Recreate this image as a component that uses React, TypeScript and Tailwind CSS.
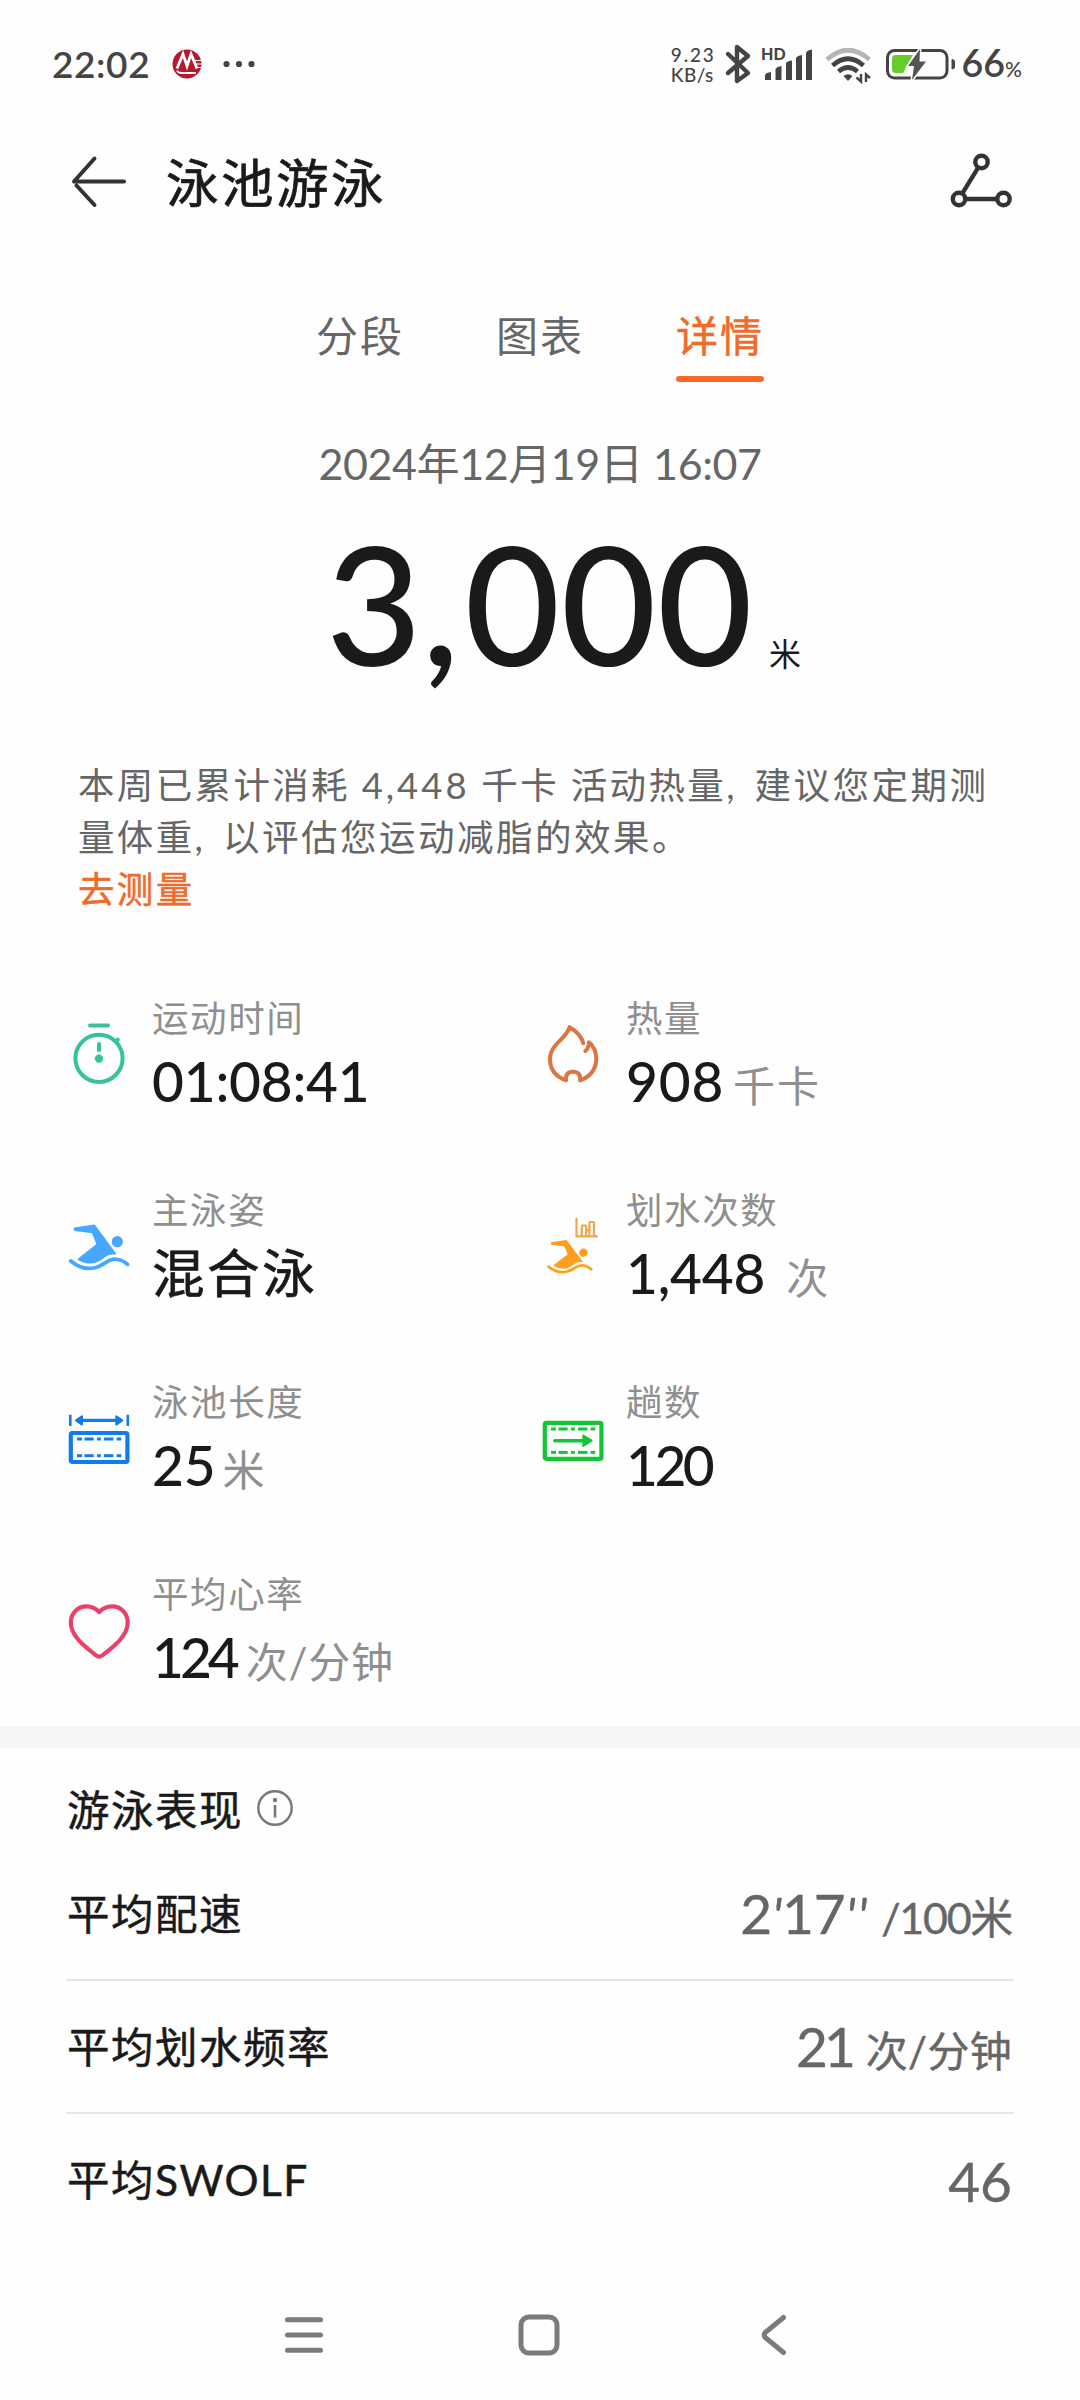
import * as React from "react";

type Stat = {
	label: string;
	value: string;
	unit?: string;
	unitClass?: string;
	valueClass?: string;
	icon: React.ReactNode;
};

const POOL_DASHES = [
	[11, 16],
	[18.5, 27.7],
	[31, 34.8],
	[38, 47.4],
	[50.6, 55.3],
];

function Dashes({ y }: { y: number }) {
	return (
		<>
			{POOL_DASHES.map(([from, to]) => (
				<path key={from} d={`M${from} ${y}H${to}`} strokeWidth="3" />
			))}
		</>
	);
}

function IconBox({ children }: { children: React.ReactNode }) {
	return (
		<svg
			viewBox="0 0 66 66"
			fill="none"
			className="w-[66px] h-[66px] shrink-0"
			aria-hidden="true"
		>
			{children}
		</svg>
	);
}

function StopwatchIcon() {
	return (
		<IconBox>
			<g stroke="#36c29a" strokeWidth="4">
				<path d="M24 4.5H42" strokeLinecap="round" />
				<circle cx="33" cy="37.3" r="23.6" />
				<path d="M50 20.5L51.8 18.6" strokeLinecap="round" />
				<path d="M33 30.7V23" />
			</g>
			<circle cx="33" cy="23" r="2" fill="#36c29a" />
			<circle cx="33" cy="37.6" r="4.2" fill="#36c29a" />
		</IconBox>
	);
}

function FlameIcon() {
	return (
		<IconBox>
			<path
				d="M43.3 22.3C41.5 15.5 35.5 9.5 29.5 6.2C26.5 18 10 23 10 38C10 49 16.5 56 26 59.3C25.5 53.5 28 50.8 33 50.8C38 50.8 40.8 53.5 40 59.3C50 56 56.3 48 56.3 38C56.3 31 53.5 25 49 21.3C48.8 25.5 47.8 28 45.3 30"
				stroke="#dd7443"
				strokeWidth="4"
				strokeLinecap="round"
				strokeLinejoin="round"
			/>
		</IconBox>
	);
}

function Swimmer({ color }: { color: string }) {
	return (
		<>
			<path
				d="M8.5 15.2L28.3 12.3L49.3 40.8C42 39.8 38.5 43.5 34.5 46.5C27.5 51 19.5 50.5 12.3 46.3L31.3 31.3L26.5 19.5L8.8 17.2Z"
				fill={color}
				stroke={color}
				strokeWidth="1.6"
				strokeLinejoin="round"
			/>
			<circle cx="51.3" cy="28.7" r="5.6" fill={color} />
			<path
				d="M4.8 48C12 54 21 57 30 54.5C40 51.5 42.5 44.5 52 46.5C56.5 47.3 59 48.8 61.5 51.3"
				stroke={color}
				strokeWidth="3.8"
				strokeLinecap="round"
			/>
		</>
	);
}

function StrokeCountIcon() {
	return (
		<IconBox>
			<g transform="translate(5 18.7) scale(.75 .73)">
				<Swimmer color="#ff9d1c" />
			</g>
			<path
				d="M36.5 5V23.3H57.8M41.8 22.5V13.5Q41.8 12.7 42.6 12.7H45.4Q46.2 12.7 46.2 13.5V22.5M46.2 17.3H49.4M49.4 22.5V10Q49.4 9 50.4 9H53Q54 9 54 10V22.5"
				stroke="#eda84d"
				strokeWidth="2.2"
			/>
		</IconBox>
	);
}

function PoolIcon() {
	return (
		<IconBox>
			<g stroke="#107dee">
				<rect x="4.8" y="28" width="56.6" height="29" rx="1.5" strokeWidth="4.2" />
				<Dashes y={34} />
				<Dashes y={50.7} />
				<path d="M4.3 9.8V21M61.8 9.8V21" strokeWidth="2.6" />
				<path d="M14 15.4H52" strokeWidth="3.4" />
				<path
					d="M10 15.4L16 11.2V19.6ZM56.3 15.4L50.3 11.2V19.6Z"
					fill="#107dee"
					strokeWidth="2"
					strokeLinejoin="round"
				/>
			</g>
		</IconBox>
	);
}

function LapsIcon() {
	return (
		<IconBox>
			<g stroke="#12c736">
				<rect x="4.8" y="17.8" width="56.6" height="36" rx="1.5" strokeWidth="4.2" />
				<Dashes y={24} />
				<Dashes y={47.4} />
				<path d="M14.8 35.7H44" strokeWidth="3.6" strokeLinecap="round" />
				<path
					d="M43.3 30.5L51.6 35.7L43.3 41Z"
					fill="#12c736"
					strokeWidth="2"
					strokeLinejoin="round"
				/>
			</g>
		</IconBox>
	);
}

function HeartIcon() {
	return (
		<IconBox>
			<path
				d="M33.2 15.2C30 11.5 25.5 9.4 20.5 9.4C11.5 9.4 4.8 16.5 4.8 25.6C4.8 39 18.5 49.5 30 58.3Q33.2 60.8 36.4 58.3C48 49.5 61.7 39 61.7 25.6C61.7 16.5 55 9.4 46 9.4C41 9.4 36.5 11.5 33.2 15.2Z"
				stroke="#e8426a"
				strokeWidth="4.2"
				strokeLinejoin="round"
			/>
		</IconBox>
	);
}

const stats: Stat[] = [
	{ label: "运动时间", value: "01:08:41", icon: <StopwatchIcon /> },
	{
		label: "热量",
		value: "908",
		valueClass: "text-[55px] tracking-[0.8px]",
		unit: "千卡",
		unitClass: "ml-[9px] tracking-[2px]",
		icon: <FlameIcon />,
	},
	{
		label: "主泳姿",
		value: "混合泳",
		valueClass:
			"text-[52.500px] tracking-[2.600px] font-normal [-webkit-text-stroke:0.7px]",
		icon: (
			<IconBox>
				<Swimmer color="#47a6ff" />
			</IconBox>
		),
	},
	{
		label: "划水次数",
		value: "1,448",
		unit: "次",
		unitClass: "ml-[21px]",
		icon: <StrokeCountIcon />,
	},
	{
		label: "泳池长度",
		value: "25",
		unit: "米",
		unitClass: "ml-[7px]",
		icon: <PoolIcon />,
	},
	{
		label: "趟数",
		value: "120",
		valueClass: "text-[55px] tracking-[-3.500px]",
		icon: <LapsIcon />,
	},
	{
		label: "平均心率",
		value: "124",
		valueClass: "text-[55px] tracking-[-4px]",
		unit: "次/分钟",
		unitClass: "ml-[10px] tracking-[0.8px]",
		icon: <HeartIcon />,
	},
];

function StatusBar() {
	return (
		<div className="flex h-32 items-center pl-[52px] pr-[58px] text-[#444]">
			<span className="text-[37px] leading-10 font-semibold tracking-[0.6px]">22:02</span>
			<svg viewBox="0 0 30 30" className="ml-[22px] w-[30px] h-[30px]" aria-hidden="true">
				<circle cx="15" cy="15" r="14.5" fill="#b8192f" />
				<g fill="none" stroke="#fff">
					<path d="M5 19.5L11 5L15 17L19 5L25 19.5" strokeWidth="2.8" />
					<path d="M5 21.5Q6 24 10 24H24" strokeWidth="2" />
					<path d="M22 11.5H30M23.5 15H30M25 18.5H30" strokeWidth="1.2" />
				</g>
			</svg>
			<svg viewBox="0 0 32 8" className="ml-[21px] w-8 h-2" fill="#444" aria-hidden="true">
				<circle cx="3.5" cy="4" r="3.1" />
				<circle cx="16" cy="4" r="3.1" />
				<circle cx="28.5" cy="4" r="3.1" />
			</svg>

			<div className="ml-auto flex flex-col pt-[2px] text-[19px] leading-[20px] font-medium">
				<span className="tracking-[1.800px]">9.23</span>
				<span className="tracking-[0.4px]">KB/s</span>
			</div>
			{/* bluetooth, signal, wifi and battery share one drawing */}
			<svg viewBox="720 40 240 48" className="ml-[5px] w-[240px] h-12" fill="none" aria-hidden="true">
				<path
					d="M727 54L747 73L736 81V47L747 56L727 73"
					stroke="#444"
					strokeWidth="4.4"
					strokeLinecap="round"
					strokeLinejoin="round"
				/>
				<text
					x="760"
					y="60"
					fill="#444"
					className="font-['Lato','Noto_Sans',sans-serif] font-black text-[16px]"
				>
					HD
				</text>
				<g fill="#444">
					<path d="M764 75Q765 72.5 770 72V80H764Z" />
					<path d="M774.5 69Q776 66.5 780.5 66V80H774.5Z" />
					<path d="M785 63Q786.500 61 791 60.500V80H785Z" />
					<path d="M795 58Q796.500 55.500 801 55V80H795Z" />
					<path d="M805 52.500Q806.500 50 811 49.500V80H805Z" />
				</g>
				<g strokeWidth="4.6">
					<path d="M826 59.500Q847 41 868.500 59.500" stroke="#b5b5b5" />
					<path d="M831.500 65.500Q847 52 862.500 65.500" stroke="#444" />
					<path d="M837.500 71.500Q847 63.500 856.500 71.500" stroke="#444" />
				</g>
				<path d="M842.500 76Q847 72.500 851.500 76L847 81Z" fill="#444" />
				<path
					d="M860 74V81.500L855.500 77.500M865 82V74.500L869 78"
					stroke="#444"
					strokeWidth="2.400"
				/>
				<rect x="886.500" y="50.500" width="59.500" height="27.500" rx="7" stroke="#444" strokeWidth="3" />
				<path d="M895 55H912L902 73H895Q891 73 891 69V59Q891 55 895 55Z" fill="#66cc2a" />
				<path d="M951 59.500Q953.500 59.500 953.500 62V67Q953.500 69 951 69Z" fill="#444" stroke="#444" />
				<path
					d="M919 49L907 66H913L911 80L925 61.500H918.500Z"
					fill="#555"
					stroke="#fff"
					strokeWidth="3"
					paintOrder="stroke"
				/>
			</svg>
			<span className="ml-[1px] pt-[4px] text-[37.500px] leading-10 font-semibold">
				66<span className="text-[21px] font-medium">%</span>
			</span>
		</div>
	);
}

function Header() {
	return (
		<header className="flex h-[108px] items-center pl-[70px] pr-[67px]">
			<svg viewBox="0 0 58 54" className="w-[58px] h-[54px]" fill="none" aria-hidden="true">
				<path
					d="M24.500 3.500L4 26.500H54M6.500 30.500L24.500 50"
					stroke="#333"
					strokeWidth="4"
					strokeLinecap="round"
					strokeLinejoin="round"
				/>
			</svg>
			<h1 className="ml-[38px] pt-px text-[52.500px] leading-[60px] tracking-[2.500px] [-webkit-text-stroke:0.7px]">
				泳池游泳
			</h1>
			<svg
				viewBox="0 0 64 58"
				className="mb-1 ml-auto w-16 h-[58px]"
				fill="none"
				stroke="#333"
				strokeWidth="4.400"
				aria-hidden="true"
			>
				<circle cx="32.500" cy="11" r="6.200" />
				<circle cx="10" cy="48" r="6.200" />
				<circle cx="54.500" cy="48" r="6.200" />
				<path d="M29.300 16.300L13.200 42.700M16.200 48H48.300" />
			</svg>
		</header>
	);
}

const TABS = ["分段", "图表", "详情"];

function Tabs() {
	const [active, setActive] = React.useState("详情");

	return (
		<nav className="mt-[74px] flex justify-center gap-[92px]">
			{TABS.map((tab) => (
				<button
					type="button"
					key={tab}
					onClick={() => setActive(tab)}
					className={`w-[88px] text-[42px] leading-[52px] whitespace-nowrap ${
						tab === active
							? "text-[#f06a28] [-webkit-text-stroke:0.5px]"
							: "text-[#666]"
					}`}
				>
					<span className="tracking-[2px]">{tab}</span>
					<span
						className={`mt-[14px] block h-[6px] rounded-full ${
							tab === active ? "bg-[#fa6824]" : "bg-transparent"
						}`}
					/>
				</button>
			))}
		</nav>
	);
}

function StatItem({ stat }: { stat: Stat }) {
	return (
		<div className="flex h-[120px] items-center gap-5">
			{stat.icon}
			<div className="flex flex-col gap-[6px]">
				<span className="text-[36.500px] leading-[48px] tracking-[1.600px] text-[#8f8f8f]">
					{stat.label}
				</span>
				<div className="flex items-baseline whitespace-nowrap font-medium">
					<span
						className={`leading-[66px] text-[#1a1a1a] ${
							stat.valueClass ?? "text-[55px] tracking-[-0.2px]"
						}`}
					>
						{stat.value}
					</span>
					{stat.unit && (
						<span
							className={`text-[42px] leading-[52px] font-normal text-[#8f8f8f] ${stat.unitClass}`}
						>
							{stat.unit}
						</span>
					)}
				</div>
			</div>
		</div>
	);
}

function DetailRow({
	label,
	children,
}: {
	label: string;
	children: React.ReactNode;
}) {
	return (
		<div className="flex h-[133px] items-center justify-between border-b-2 border-[#e5e5e5] last:border-transparent">
			<span className="pl-px text-[42.500px] leading-[52px] tracking-[1.500px] [-webkit-text-stroke:0.5px]">
				{label}
			</span>
			<span className="flex items-baseline pt-[3px] pr-[2px] text-[55px] leading-[66px] text-[#666] [-webkit-text-stroke:0.4px]">
				{children}
			</span>
		</div>
	);
}

function NavBar() {
	return (
		<div className="mt-auto flex h-[130px] items-center pl-[282px]">
			<svg viewBox="0 0 44 44" className="w-11 h-11" fill="none" aria-hidden="true">
				<path
					d="M5.500 6.700H38.500M5.500 22H38.500M5.500 37.300H38.500"
					stroke="#7b7b7b"
					strokeWidth="5"
					strokeLinecap="round"
				/>
			</svg>
			<svg viewBox="0 0 44 44" className="ml-[191px] w-11 h-11" fill="none" aria-hidden="true">
				<rect x="4" y="4" width="36" height="36" rx="8" stroke="#7b7b7b" strokeWidth="5" />
			</svg>
			<svg viewBox="0 0 44 44" className="ml-[191px] w-11 h-11" fill="none" aria-hidden="true">
				<path
					d="M31.500 4.500L13.500 19.200Q11 22 13.500 24.800L31.500 39.500"
					stroke="#7b7b7b"
					strokeWidth="5"
					strokeLinecap="round"
				/>
			</svg>
		</div>
	);
}

export default function App() {
	return (
		<div className="flex h-[2400px] w-[1080px] flex-col overflow-hidden bg-[#fefefe] font-['Lato','Noto_Sans_CJK_SC',sans-serif] text-[#1a1a1a]">
			<StatusBar />
			<Header />
			<Tabs />

			<div className="mt-[54px] text-center text-[43px] leading-[56px] tracking-[-0.4px] text-[#666]">
				2024年12月19日 16:07
			</div>
			<div className="mt-[28px] flex items-baseline pl-[326px]">
				<span className="text-[165px] leading-[165px] font-medium">
					3<span className="tracking-[5px]">,</span>
					<span className="tracking-[0.5px]">000</span>
				</span>
				<span className="ml-[16px] text-[32px] leading-10">米</span>
			</div>

			<p className="mt-[74px] pl-[78px] text-[36.500px] leading-[52px] tracking-[2.350px] text-[#666]">
				本周已累计消耗 <span className="tracking-[3px]">4,448</span> 千卡 活动热量
				<span className="mr-[6px]">,</span> <span className="tracking-[2.500px]">建议您定期测</span>
				<br />
				量体重<span className="mr-[6px]">,</span>{" "}
				<span className="tracking-[2.500px]">以评估您运动减脂的效果。</span>
				<br />
				<a href="#measure" className="text-[#f06a28] [-webkit-text-stroke:0.5px]">
					去测量
				</a>
			</p>

			<div className="mt-[79px] grid grid-cols-[474px_1fr] gap-y-[72px] pl-[66px]">
				{stats.map((stat) => (
					<StatItem key={stat.label} stat={stat} />
				))}
			</div>

			<div className="mt-9 h-[22px] shrink-0 bg-[#f6f6f6]" />

			<section className="px-[66px]">
				<div className="mt-[34px] flex items-center">
					<h2 className="pl-px text-[42.500px] leading-[56px] tracking-[1.500px] [-webkit-text-stroke:0.5px]">
						游泳表现
					</h2>
					<svg
						viewBox="0 0 38 38"
						className="mb-1 ml-[13px] w-[38px] h-[38px]"
						fill="none"
						aria-hidden="true"
					>
						<circle cx="19" cy="19" r="16.700" stroke="#777" strokeWidth="2.400" />
						<path d="M19 16V28.500" stroke="#777" strokeWidth="2.600" />
						<circle cx="19" cy="11" r="2.200" fill="#777" />
					</svg>
				</div>
				<div className="mt-[10px]">
					<DetailRow label="平均配速">
						<span>
							2<i className="text-[50px]">'</i>17
							<i className="text-[50px] tracking-[2px]">''</i>
						</span>
						<span className="ml-[12px] text-[43px] tracking-[-1.300px]">/100米</span>
					</DetailRow>
					<DetailRow label="平均划水频率">
						<span className="tracking-[-4px]">21</span>
						<span className="ml-[14px] text-[42px] tracking-[0.3px]">次/分钟</span>
					</DetailRow>
					<DetailRow label="平均SWOLF">46</DetailRow>
				</div>
			</section>

			<NavBar />
		</div>
	);
}
